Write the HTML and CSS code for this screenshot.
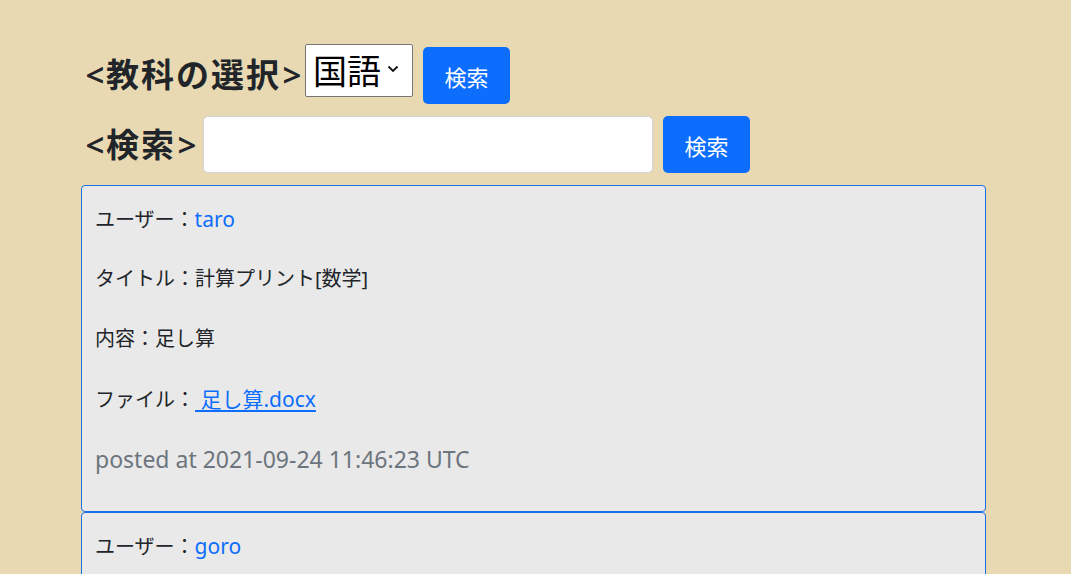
FILE: index.html
```html
<!DOCTYPE html>
<html lang="ja">
<head>
<meta charset="utf-8">
<title>教科</title>
<link rel="stylesheet" href="styles.css">
</head>
<body>
<div class="container">
  <form class="row row-subject">
    <h2 class="label"><span class="br">&lt;</span>教科の選択<span class="br">&gt;</span></h2>
    <div class="select-box">
      <span class="select-text">国語</span>
      <svg class="chev" width="12" height="8" viewBox="0 0 12 8"><path d="M1.5 1.5 L6 6 L10.5 1.5" fill="none" stroke="#111" stroke-width="1.8"/></svg>
    </div>
    <button type="button" class="btn btn-subject">検索</button>
  </form>
  <form class="row row-search">
    <h2 class="label"><span class="br">&lt;</span>検索<span class="br">&gt;</span></h2>
    <input class="input" type="text">
    <button type="button" class="btn">検索</button>
  </form>
  <div class="card">
    <p>ユーザー：<a href="#" class="plain">taro</a></p>
    <p>タイトル：計算プリント[数学]</p>
    <p>内容：足し算</p>
    <p>ファイル：<a href="#" class="under">&nbsp;足し算.docx</a></p>
    <p class="muted">posted at 2021-09-24 11:46:23 UTC</p>
  </div>
  <div class="card">
    <p>ユーザー：<a href="#" class="plain">goro</a></p>
    <p>タイトル：漢字プリント[国語]</p>
    <p>内容：漢字の書き取り</p>
  </div>
</div>
</body>
</html>
```
FILE: styles.css
```css
html, body {
  margin: 0;
  padding: 0;
}
body {
  background: #e8d9b2;
  font-family: "Noto Sans", "Noto Sans CJK JP", sans-serif;
  color: #212529;
  overflow: hidden;
  height: 574px;
}
.container {
  margin-left: 81px;
  width: 905px;
  padding-top: 44px;
}
.row {
  display: flex;
  align-items: center;
  margin: 0;
}
.row-subject {
  height: 60px;
  align-items: flex-start;
}
.row-search {
  margin-top: 12px;
  height: 57px;
  margin-bottom: 12px;
}
.label {
  display: flex;
  align-items: center;
  font-size: 33px;
  font-weight: 700;
  margin: 0 0 0 3px;
  line-height: 1;
  white-space: nowrap;
  letter-spacing: 2px;
}
.row-search .label {
  margin-right: 3px;
}
.br {
  display: inline-block;
  width: 22px;
  text-align: center;
  letter-spacing: 0;
  font-weight: 600;
}
.row-subject .label {
  margin-top: 14px;
}
.select-box {
  box-sizing: border-box;
  width: 108px;
  height: 53px;
  background: #fff;
  border: 1px solid #767676;
  border-radius: 2px;
  display: flex;
  align-items: center;
  padding-left: 7px;
  margin-left: 2px;
}
.select-text {
  font-size: 34px;
  color: #000;
  line-height: 1;
}
.chev {
  margin-left: 6px;
  margin-top: -4px;
}
.btn {
  box-sizing: border-box;
  height: 57px;
  width: 87px;
  background: #0d6efd;
  color: #fff;
  border: none;
  border-radius: 5px;
  font-family: inherit;
  font-size: 22px;
  padding: 0;
  margin-left: 10px;
}
.btn-subject {
  margin-top: 3px;
}
.input {
  box-sizing: border-box;
  width: 450px;
  height: 57px;
  margin-left: 2px;
  background: #fff;
  border: 1px solid #ced4da;
  border-radius: 5px;
}
.card {
  box-sizing: border-box;
  background: #e9e9e9;
  border: 1px solid #1a6ee8;
  border-radius: 4px;
  padding: 13px 13px 12px;
  margin-bottom: 0;
}
.card p {
  margin: 0 0 20px;
  font-size: 20px;
  line-height: 40px;
  height: 40px;
  white-space: nowrap;
}
.plain {
  color: #0d6efd;
  text-decoration: none;
  font-size: 21px;
}
.under {
  color: #0d6efd;
  text-decoration: underline;
  text-underline-offset: 3px;
  font-size: 21px;
}
.card p.muted {
  color: #6c757d;
  font-size: 23px;
}
```
